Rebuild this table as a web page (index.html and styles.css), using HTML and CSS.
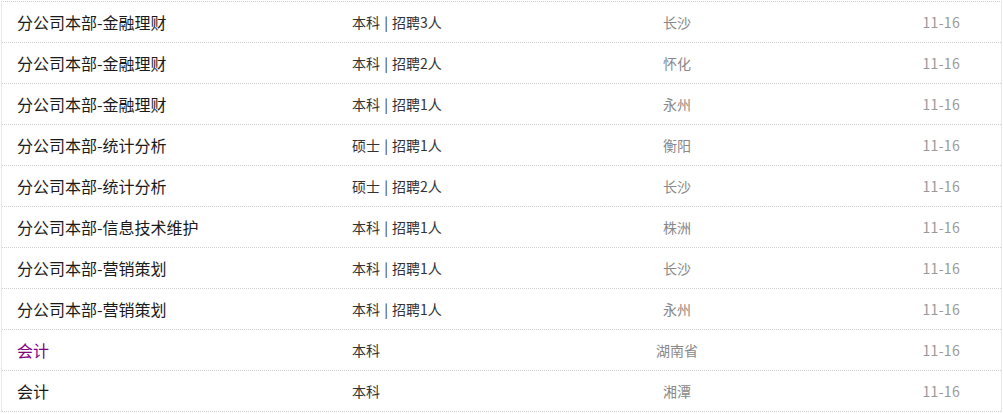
FILE: index.html
```html
<!DOCTYPE html>
<html lang="zh-CN">
<head>
<meta charset="utf-8">
<title>招聘列表</title>
<link rel="stylesheet" href="styles.css">
</head>
<body>
<ul class="list">
  <li class="row"><a class="title" href="#">分公司本部-金融理财</a><span class="req">本科 | 招聘3人</span><span class="city">长沙</span><span class="date">11-16</span></li>
  <li class="row"><a class="title" href="#">分公司本部-金融理财</a><span class="req">本科 | 招聘2人</span><span class="city">怀化</span><span class="date">11-16</span></li>
  <li class="row"><a class="title" href="#">分公司本部-金融理财</a><span class="req">本科 | 招聘1人</span><span class="city">永州</span><span class="date">11-16</span></li>
  <li class="row"><a class="title" href="#">分公司本部-统计分析</a><span class="req">硕士 | 招聘1人</span><span class="city">衡阳</span><span class="date">11-16</span></li>
  <li class="row"><a class="title" href="#">分公司本部-统计分析</a><span class="req">硕士 | 招聘2人</span><span class="city">长沙</span><span class="date">11-16</span></li>
  <li class="row"><a class="title" href="#">分公司本部-信息技术维护</a><span class="req">本科 | 招聘1人</span><span class="city">株洲</span><span class="date">11-16</span></li>
  <li class="row"><a class="title" href="#">分公司本部-营销策划</a><span class="req">本科 | 招聘1人</span><span class="city">长沙</span><span class="date">11-16</span></li>
  <li class="row"><a class="title" href="#">分公司本部-营销策划</a><span class="req">本科 | 招聘1人</span><span class="city">永州</span><span class="date">11-16</span></li>
  <li class="row"><a class="title visited" href="#">会计</a><span class="req">本科</span><span class="city">湖南省</span><span class="date">11-16</span></li>
  <li class="row"><a class="title" href="#">会计</a><span class="req">本科</span><span class="city">湘潭</span><span class="date">11-16</span></li>
</ul>
</body>
</html>
```

FILE: styles.css
```css
html, body {
  margin: 0;
  padding: 0;
  background: #fff;
}
body {
  font-family: "Microsoft YaHei", "Noto Sans CJK SC", "Noto Sans", sans-serif;
}
.list {
  list-style: none;
  margin: 1px 0 0 1px;
  padding: 0;
  width: 999px;
  border-left: 1px solid #e8e8e8;
  border-right: 1px solid #e8e8e8;
  border-top: 1px dotted #cfcfcf;
}
.row {
  display: grid;
  grid-template-columns: 350px 250px 150px 1fr;
  align-items: center;
  height: 40px;
  line-height: 40px;
  border-bottom: 1px dotted #cfcfcf;
}
.title {
  padding-left: 15px;
  font-size: 16px;
  color: #1a1a1a;
  text-decoration: none;
  white-space: nowrap;
}
.title.visited {
  color: #800080;
}
.req {
  font-size: 14px;
  color: #333;
  white-space: pre;
  word-spacing: 1px;
}
.city {
  font-size: 14px;
  color: #888;
  text-align: center;
}
.date {
  font-size: 14px;
  color: #999;
  text-align: right;
  padding-right: 41px;
  letter-spacing: 0.3px;
}
```
